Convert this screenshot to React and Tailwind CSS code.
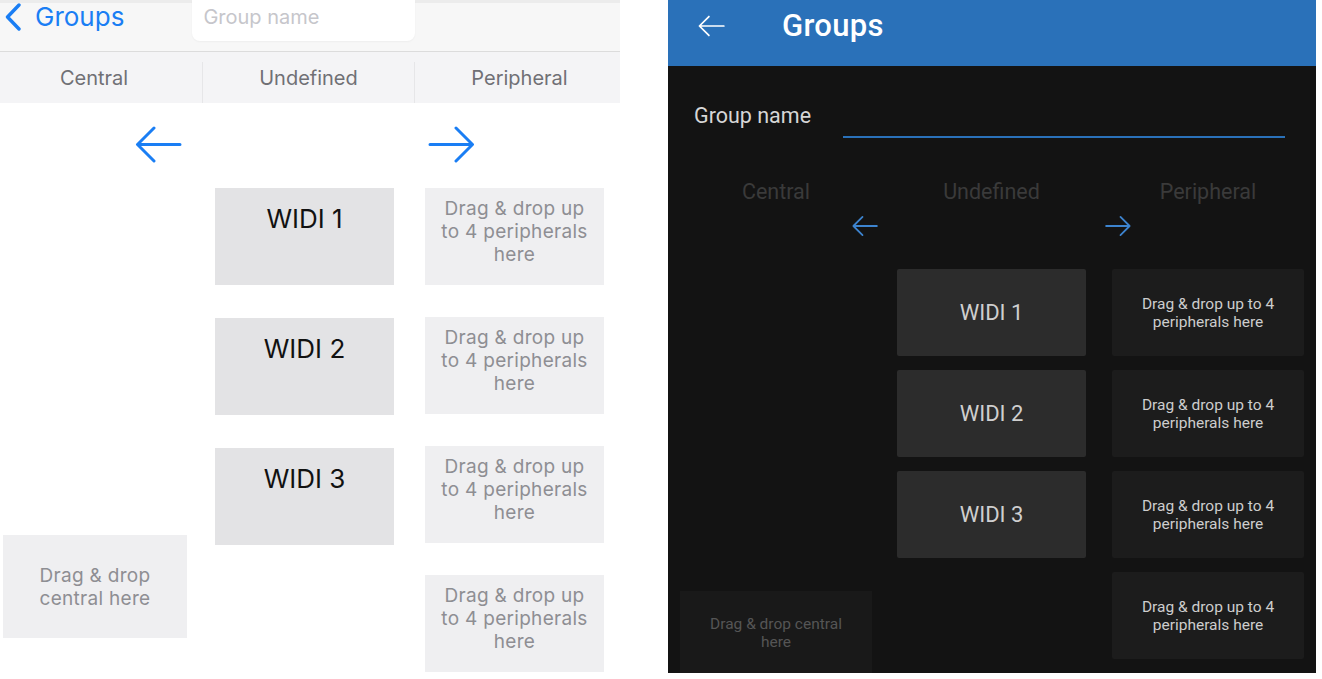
const iosFont = { fontFamily: "Inter, 'Noto Sans', sans-serif" };
const droidFont = { fontFamily: "Roboto, 'Noto Sans', sans-serif" };

function Arrow({ dir = "left", className, strokeWidth = 3 }) {
  // horizontal arrow with an open chevron head
  const d = dir === "left" ? "M45 18.5H3M19 2L2.5 18.5 19 35" : "M2 18.5h42M28 2l16.5 16.5L28 35";
  return (
    <svg viewBox="0 0 47 37" className={className} fill="none" stroke="currentColor" strokeWidth={strokeWidth} strokeLinecap="round" strokeLinejoin="round">
      <path d={d} />
    </svg>
  );
}

function IosPanel() {
  const widis = ["WIDI 1", "WIDI 2", "WIDI 3"];
  return (
    <div className="w-[620px] h-[679px] shrink-0 bg-white flex flex-col overflow-hidden" style={iosFont}>
      <div className="h-[52px] shrink-0 bg-[#f7f7f7] border-t-[3px] border-[#ececec] border-b border-b-[#dcdcdc] flex items-start">
        <div className="flex items-center h-[28px] pl-[5px] text-[#1a7ef4]">
          <svg viewBox="0 0 16 28" className="w-[16px] h-[28px]" fill="none" stroke="currentColor" strokeWidth="3.4" strokeLinecap="round" strokeLinejoin="round">
            <path d="M14 2L2.5 14 14 26" />
          </svg>
          <span className="ml-[14px] text-[26px] leading-none">Groups</span>
        </div>
        <div className="ml-[68px] -mt-[3px] w-[223px] h-[41px] bg-white rounded-b-[8px] shadow-[0_1px_2px_rgba(0,0,0,0.04)] pl-[11px] pt-[2px] text-[20px] text-[#c6c6cb]">
          Group name
        </div>
      </div>
      <div className="h-[51px] shrink-0 bg-[#f4f4f6] flex text-[20px] text-[#707075]">
        <div className="w-[202px] flex items-center justify-center pr-[14px]">Central</div>
        <div className="w-[213px] flex items-center justify-center border-l border-r border-[#e6e6e8] mt-[10px] pb-[10px]">Undefined</div>
        <div className="flex-1 flex items-center justify-center pl-[4px]">Peripheral</div>
      </div>
      <div className="flex shrink-0 items-center h-[37px] mt-[23px] text-[#1a7ef4]">
        <Arrow dir="left" className="w-[47px] h-[37px] ml-[135px]" />
        <Arrow dir="right" className="w-[47px] h-[37px] ml-[246px]" />
      </div>
      <div className="flex shrink-0 mt-[25px] pl-[3px]">
        <div className="w-[184px]">
          <div className="mt-[347px] h-[103px] bg-[#efeff1] flex items-center justify-center text-center text-[19px] leading-[23px] tracking-[0.3px] text-[#8e8e93]">
            Drag &amp; drop
            <br />
            central here
          </div>
        </div>
        <div className="w-[179px] ml-[28px] flex flex-col gap-[33px]">
          {widis.map((w) => (
            <div key={w} className="h-[97px] bg-[#e3e3e5] text-center pt-[11px] text-[26px] text-[#111]">
              {w}
            </div>
          ))}
        </div>
        <div className="w-[179px] ml-[31px] flex flex-col gap-[32px]">
          {[0, 1, 2, 3].map((i) => (
            <div key={i} className="h-[97px] bg-[#efeff1] text-center pt-[9px] text-[19px] leading-[23px] tracking-[0.3px] text-[#8e8e93]">
              Drag &amp; drop up
              <br />
              to 4 peripherals
              <br />
              here
            </div>
          ))}
        </div>
      </div>
    </div>
  );
}

function AndroidPanel() {
  const widis = ["WIDI 1", "WIDI 2", "WIDI 3"];
  return (
    <div className="w-[648px] h-[673px] shrink-0 bg-[#131313] flex flex-col overflow-hidden" style={droidFont}>
      <div className="h-[66px] shrink-0 bg-[#2a71b9] flex items-center pb-[14px] text-white">
        <Arrow dir="left" strokeWidth={3} className="w-[27px] h-[22px] ml-[30px]" />
        <span className="ml-[57px] text-[31px] font-medium tracking-[0.3px]">Groups</span>
      </div>
      <div className="flex shrink-0 items-end h-[72px] pl-[26px] pr-[31px]">
        <span className="text-[21.5px] text-[#d6d6d6] pb-[6px]">Group name</span>
        <div className="flex-1 ml-[32px] h-[2px] bg-[#2a71b9]" />
      </div>
      <div className="flex shrink-0 mt-[41px] pl-[12px] text-[21.5px] text-[#3a3a3a] h-[26px] items-center">
        <div className="w-[192px] text-center">Central</div>
        <div className="w-[189px] ml-[25px] text-center">Undefined</div>
        <div className="w-[192px] ml-[26px] text-center">Peripheral</div>
      </div>
      <div className="flex shrink-0 items-center h-[24px] mt-[9px] text-[#3d84cf]">
        <Arrow dir="left" strokeWidth={3.2} className="w-[26px] h-[22px] ml-[184px]" />
        <Arrow dir="right" strokeWidth={3.2} className="w-[26px] h-[22px] ml-[227px]" />
      </div>
      <div className="flex shrink-0 mt-[31px] pl-[12px]">
        <div className="w-[192px]">
          <div className="mt-[322px] h-[90px] bg-[#191919] flex items-center justify-center text-center text-[15.5px] leading-[18px] text-[#555] pb-[6px]">
            Drag &amp; drop central
            <br />
            here
          </div>
        </div>
        <div className="w-[189px] ml-[25px] flex flex-col gap-[14px]">
          {widis.map((w) => (
            <div key={w} className="h-[87px] bg-[#2c2c2c] rounded-[2px] flex items-center justify-center text-[22px] text-[#cfcfcf]">
              {w}
            </div>
          ))}
        </div>
        <div className="w-[192px] ml-[26px] flex flex-col gap-[14px]">
          {[0, 1, 2, 3].map((i) => (
            <div key={i} className="h-[87px] bg-[#1c1c1c] rounded-[2px] flex items-center justify-center text-center text-[15.5px] leading-[18px] text-[#cdcdcd]">
              Drag &amp; drop up to 4
              <br />
              peripherals here
            </div>
          ))}
        </div>
      </div>
    </div>
  );
}

export default function App() {
  return (
    <div className="w-[1322px] h-[679px] bg-white flex overflow-hidden">
      <IosPanel />
      <div className="w-[48px] shrink-0" />
      <AndroidPanel />
    </div>
  );
}
